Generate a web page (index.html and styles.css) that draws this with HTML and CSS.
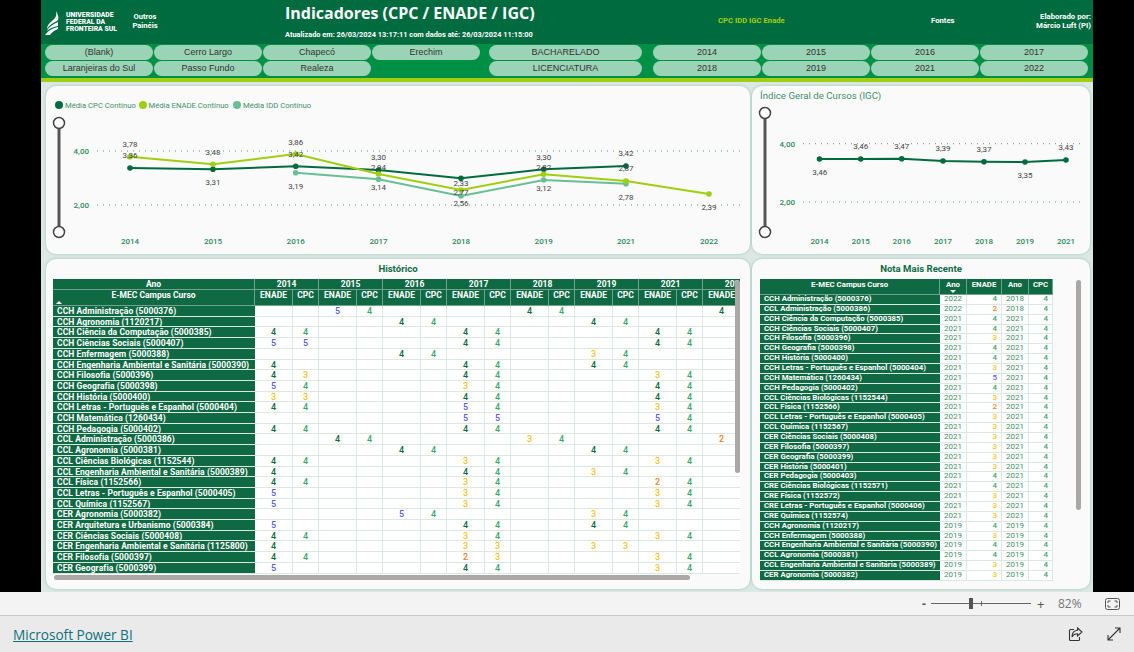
FILE: index.html
```html
<!DOCTYPE html>
<html lang="pt-BR">
<head>
  <meta charset="UTF-8">
  <title>Indicadores (CPC / ENADE / IGC)</title>
  <link rel="stylesheet" href="styles.css">
</head>
<body>

  <div class="stage">
    <div class="report">

      <header class="topbar">
        <div class="brand">
          <svg class="brand-logo" width="16" height="24" viewBox="0 0 16 24">
            <path fill="#fff" d="M11 0C12 4 11 7 7 10C4 12 2 15 2 18C4 14 8 12 12 10C14 9 14 5 11 0Z"/>
            <path fill="#fff" d="M13 11C9 13 4 15 2 20C5 17 9 16 13 15Z"/>
            <path fill="#fff" d="M13 16C8 17 4 19 1 23L0 24H5C7 21 10 19 13 18Z"/>
          </svg>
          <div class="brand-name">UNIVERSIDADE<br>FEDERAL DA<br>FRONTEIRA SUL</div>
        </div>
        <div class="outros">Outros<br>Painéis</div>
        <div class="heading">
          <h1>Indicadores (CPC / ENADE / IGC)</h1>
          <p>Atualizado em: 26/03/2024 13:17:11 com dados até: 26/03/2024 11:15:00</p>
        </div>
        <div class="toplink lime">CPC IDD IGC Enade</div>
        <div class="toplink">Fontes</div>
        <div class="author">Elaborado por:<br>Márcio Luft (PI)</div>
      </header>

      <nav class="filters">
        <div class="slicer slicer-campus">
          <button>(Blank)</button><button>Cerro Largo</button><button>Chapecó</button><button>Erechim</button>
          <button>Laranjeiras do Sul</button><button>Passo Fundo</button><button>Realeza</button>
        </div>
        <div class="slicer slicer-grau">
          <button>BACHARELADO</button>
          <button>LICENCIATURA</button>
        </div>
        <div class="slicer slicer-ano">
          <button>2014</button><button>2015</button><button>2016</button><button>2017</button>
          <button>2018</button><button>2019</button><button>2021</button><button>2022</button>
        </div>
      </nav>
      <div class="limebar"></div>

      <main class="canvas">

        <section class="card">
          <svg class="chart" width="704" height="168" viewBox="46 86 704 168">
            <circle cx="59" cy="105" r="4" fill="#006b3f"/>
            <text class="legend" x="65" y="108">Média CPC Contínuo</text>
            <circle cx="143" cy="105" r="4" fill="#a0ce10"/>
            <text class="legend" x="148.500" y="108">Média ENADE Contínuo</text>
            <circle cx="237" cy="105" r="4" fill="#68bf96"/>
            <text class="legend" x="243" y="108">Média IDD Contínuo</text>

            <line class="range" x1="59" y1="123" x2="59" y2="232"/>
            <circle class="knob" cx="59" cy="123" r="5.5"/>
            <circle class="knob" cx="59" cy="232" r="5.5"/>

            <text class="axis" x="89" y="154" text-anchor="end">4,00</text>
            <text class="axis" x="89" y="208" text-anchor="end">2,00</text>
            <line class="grid" x1="97" y1="151" x2="740" y2="151"/>
            <line class="grid" x1="97" y1="205" x2="740" y2="205"/>

            <polyline class="line idd" points="295.7,172.7 378.5,179.3 461,196 543.7,180 626,183.7"/>
            <polyline class="line cpc" points="130,168 213,169.3 295.7,166.3 378.5,170 461,178.3 543.7,169.3 626,166"/>
            <polyline class="line enade" points="130,156.7 213,164.3 295.7,154 378.5,174 461,190 543.7,174.3 626,181 709,194"/>

            <g fill="#68bf96">
              <circle cx="295.7" cy="172.7" r="2.8"/><circle cx="378.5" cy="179.3" r="2.8"/><circle cx="461" cy="196" r="2.8"/><circle cx="543.7" cy="180" r="2.8"/><circle cx="626" cy="183.7" r="2.8"/>
            </g>
            <g fill="#006b3f">
              <circle cx="130" cy="168" r="2.8"/><circle cx="213" cy="169.3" r="2.8"/><circle cx="295.7" cy="166.3" r="2.8"/><circle cx="378.5" cy="170" r="2.8"/><circle cx="461" cy="178.3" r="2.8"/><circle cx="543.7" cy="169.3" r="2.8"/><circle cx="626" cy="166" r="2.8"/>
            </g>
            <g fill="#a0ce10">
              <circle cx="130" cy="156.7" r="2.8"/><circle cx="213" cy="164.3" r="2.8"/><circle cx="295.7" cy="154" r="2.8"/><circle cx="378.5" cy="174" r="2.8"/><circle cx="461" cy="190" r="2.8"/><circle cx="543.7" cy="174.3" r="2.8"/><circle cx="626" cy="181" r="2.8"/><circle cx="709" cy="194" r="2.8"/>
            </g>

            <g class="values" text-anchor="middle">
              <text x="130" y="147">3,78</text><text x="130" y="158">3,36</text>
              <text x="213" y="155">3,48</text><text x="213" y="185">3,31</text>
              <text x="295.7" y="145">3,86</text><text x="295.7" y="157">3,42</text><text x="295.7" y="189">3,19</text>
              <text x="378.5" y="160">3,30</text><text x="378.5" y="170">2,94</text><text x="378.5" y="190">3,14</text>
              <text x="461" y="186">2,33</text><text x="461" y="195">2,77</text><text x="461" y="206">2,56</text>
              <text x="543.7" y="160">3,30</text><text x="543.7" y="170">2,82</text><text x="543.7" y="191">3,12</text>
              <text x="626" y="156">3,42</text><text x="626" y="171">2,87</text><text x="626" y="200">2,78</text>
              <text x="709" y="210">2,39</text>
            </g>

            <g class="axis" text-anchor="middle">
              <text x="130" y="244">2014</text><text x="213" y="244">2015</text><text x="295.7" y="244">2016</text><text x="378.5" y="244">2017</text>
              <text x="461" y="244">2018</text><text x="543.7" y="244">2019</text><text x="626" y="244">2021</text><text x="709" y="244">2022</text>
            </g>
          </svg>
        </section>

        <section class="card">
          <svg class="chart" width="338" height="168" viewBox="752 86 338 168">
            <text class="chart-title" x="760" y="99">Índice Geral de Cursos (IGC)</text>

            <line class="range" x1="765" y1="113" x2="765" y2="232"/>
            <circle class="knob" cx="765" cy="113" r="5.5"/>
            <circle class="knob" cx="765" cy="232" r="5.5"/>

            <text class="axis" x="795" y="147" text-anchor="end">4,00</text>
            <text class="axis" x="795" y="205" text-anchor="end">2,00</text>
            <line class="grid" x1="803" y1="143.7" x2="1082" y2="143.7"/>
            <line class="grid" x1="803" y1="202" x2="1082" y2="202"/>

            <polyline class="line cpc" points="819.5,159 860.7,159 901.7,158.7 943,161 984,161.7 1025,162 1066,160"/>
            <g fill="#006b3f">
              <circle cx="819.5" cy="159" r="2.8"/><circle cx="860.7" cy="159" r="2.8"/><circle cx="901.7" cy="158.7" r="2.8"/><circle cx="943" cy="161" r="2.8"/><circle cx="984" cy="161.7" r="2.8"/><circle cx="1025" cy="162" r="2.8"/><circle cx="1066" cy="160" r="2.8"/>
            </g>

            <g class="values" text-anchor="middle">
              <text x="819.7" y="175">3,46</text><text x="860.7" y="149">3,46</text><text x="901.7" y="149">3,47</text><text x="943" y="151">3,39</text>
              <text x="984" y="152">3,37</text><text x="1025" y="178">3,35</text><text x="1066" y="150">3,43</text>
            </g>

            <g class="axis" text-anchor="middle">
              <text x="819.5" y="244">2014</text><text x="860.7" y="244">2015</text><text x="901.7" y="244">2016</text><text x="943" y="244">2017</text>
              <text x="984" y="244">2018</text><text x="1025" y="244">2019</text><text x="1066" y="244">2021</text>
            </g>
          </svg>
        </section>

        <section class="card card-table">
          <h2>Histórico</h2>
          <div class="table-wrap hist-wrap">
            <table class="matrix">
              <colgroup>
                <col class="col-name"><col class="col-e"><col class="col-c"><col class="col-e"><col class="col-c"><col class="col-e"><col class="col-c"><col class="col-e"><col class="col-c"><col class="col-e"><col class="col-c"><col class="col-e"><col class="col-c"><col class="col-e"><col class="col-c"><col class="col-e"><col class="col-c">
              </colgroup>
              <thead>
                <tr class="head-year"><th>Ano</th><th colspan="2">2014</th><th colspan="2">2015</th><th colspan="2">2016</th><th colspan="2">2017</th><th colspan="2">2018</th><th colspan="2">2019</th><th colspan="2">2021</th><th colspan="2">2022</th></tr>
                <tr class="head-cols"><th>E-MEC Campus Curso<i class="sort-up"></i></th><th>ENADE</th><th>CPC</th><th>ENADE</th><th>CPC</th><th>ENADE</th><th>CPC</th><th>ENADE</th><th>CPC</th><th>ENADE</th><th>CPC</th><th>ENADE</th><th>CPC</th><th>ENADE</th><th>CPC</th><th>ENADE</th><th>CPC</th></tr>
              </thead>
              <tbody>
                <tr><th>CCH Administração (5000376)</th><td></td><td></td><td class="n5">5</td><td class="n4">4</td><td></td><td></td><td></td><td></td><td class="d4">4</td><td class="n4">4</td><td></td><td></td><td></td><td></td><td class="d4">4</td><td></td></tr>
                <tr><th>CCH Agronomia (1120217)</th><td></td><td></td><td></td><td></td><td class="d4">4</td><td class="n4">4</td><td></td><td></td><td></td><td></td><td class="d4">4</td><td class="n4">4</td><td></td><td></td><td></td><td></td></tr>
                <tr><th>CCH Ciência da Computação (5000385)</th><td class="d4">4</td><td class="n4">4</td><td></td><td></td><td></td><td></td><td class="d4">4</td><td class="n4">4</td><td></td><td></td><td></td><td></td><td class="d4">4</td><td class="n4">4</td><td></td><td></td></tr>
                <tr><th>CCH Ciências Sociais (5000407)</th><td class="n5">5</td><td class="n5">5</td><td></td><td></td><td></td><td></td><td class="d4">4</td><td class="n4">4</td><td></td><td></td><td></td><td></td><td class="d4">4</td><td class="n4">4</td><td></td><td></td></tr>
                <tr><th>CCH Enfermagem (5000388)</th><td></td><td></td><td></td><td></td><td class="d4">4</td><td class="n4">4</td><td></td><td></td><td></td><td></td><td class="n3">3</td><td class="n4">4</td><td></td><td></td><td></td><td></td></tr>
                <tr><th>CCH Engenharia Ambiental e Sanitária (5000390)</th><td class="d4">4</td><td></td><td></td><td></td><td></td><td></td><td class="d4">4</td><td class="n4">4</td><td></td><td></td><td class="d4">4</td><td class="n4">4</td><td></td><td></td><td></td><td></td></tr>
                <tr><th>CCH Filosofia (5000396)</th><td class="d4">4</td><td class="n3">3</td><td></td><td></td><td></td><td></td><td class="d4">4</td><td class="n4">4</td><td></td><td></td><td></td><td></td><td class="n3">3</td><td class="n4">4</td><td></td><td></td></tr>
                <tr><th>CCH Geografia (5000398)</th><td class="n5">5</td><td class="n4">4</td><td></td><td></td><td></td><td></td><td class="n3">3</td><td class="n4">4</td><td></td><td></td><td></td><td></td><td class="d4">4</td><td class="n4">4</td><td></td><td></td></tr>
                <tr><th>CCH História (5000400)</th><td class="n3">3</td><td class="n3">3</td><td></td><td></td><td></td><td></td><td class="d4">4</td><td class="n4">4</td><td></td><td></td><td></td><td></td><td class="d4">4</td><td class="n4">4</td><td></td><td></td></tr>
                <tr><th>CCH Letras - Português e Espanhol (5000404)</th><td class="d4">4</td><td class="n4">4</td><td></td><td></td><td></td><td></td><td class="n5">5</td><td class="n4">4</td><td></td><td></td><td></td><td></td><td class="n3">3</td><td class="n4">4</td><td></td><td></td></tr>
                <tr><th>CCH Matemática (1260434)</th><td></td><td></td><td></td><td></td><td></td><td></td><td class="n5">5</td><td class="n5">5</td><td></td><td></td><td></td><td></td><td class="n5">5</td><td class="n4">4</td><td></td><td></td></tr>
                <tr><th>CCH Pedagogia (5000402)</th><td class="d4">4</td><td class="n4">4</td><td></td><td></td><td></td><td></td><td class="d4">4</td><td class="n4">4</td><td></td><td></td><td></td><td></td><td class="d4">4</td><td class="n4">4</td><td></td><td></td></tr>
                <tr><th>CCL Administração (5000386)</th><td></td><td></td><td class="d4">4</td><td class="n4">4</td><td></td><td></td><td></td><td></td><td class="n3">3</td><td class="n4">4</td><td></td><td></td><td></td><td></td><td class="n2">2</td><td></td></tr>
                <tr><th>CCL Agronomia (5000381)</th><td></td><td></td><td></td><td></td><td class="d4">4</td><td class="n4">4</td><td></td><td></td><td></td><td></td><td class="d4">4</td><td class="n4">4</td><td></td><td></td><td></td><td></td></tr>
                <tr><th>CCL Ciências Biológicas (1152544)</th><td class="d4">4</td><td class="n4">4</td><td></td><td></td><td></td><td></td><td class="n3">3</td><td class="n4">4</td><td></td><td></td><td></td><td></td><td class="n3">3</td><td class="n4">4</td><td></td><td></td></tr>
                <tr><th>CCL Engenharia Ambiental e Sanitária (5000389)</th><td class="d4">4</td><td></td><td></td><td></td><td></td><td></td><td class="d4">4</td><td class="n4">4</td><td></td><td></td><td class="n3">3</td><td class="n4">4</td><td></td><td></td><td></td><td></td></tr>
                <tr><th>CCL Física (1152566)</th><td class="d4">4</td><td class="n4">4</td><td></td><td></td><td></td><td></td><td class="n3">3</td><td class="n4">4</td><td></td><td></td><td></td><td></td><td class="n2">2</td><td class="n4">4</td><td></td><td></td></tr>
                <tr><th>CCL Letras - Português e Espanhol (5000405)</th><td class="n5">5</td><td></td><td></td><td></td><td></td><td></td><td class="n3">3</td><td class="n4">4</td><td></td><td></td><td></td><td></td><td class="n3">3</td><td class="n4">4</td><td></td><td></td></tr>
                <tr><th>CCL Química (1152567)</th><td class="n5">5</td><td></td><td></td><td></td><td></td><td></td><td class="n3">3</td><td class="n4">4</td><td></td><td></td><td></td><td></td><td class="n3">3</td><td class="n4">4</td><td></td><td></td></tr>
                <tr><th>CER Agronomia (5000382)</th><td></td><td></td><td></td><td></td><td class="n5">5</td><td class="n4">4</td><td></td><td></td><td></td><td></td><td class="n3">3</td><td class="n4">4</td><td></td><td></td><td></td><td></td></tr>
                <tr><th>CER Arquitetura e Urbanismo (5000384)</th><td class="n5">5</td><td></td><td></td><td></td><td></td><td></td><td class="d4">4</td><td class="n4">4</td><td></td><td></td><td class="d4">4</td><td class="n4">4</td><td></td><td></td><td></td><td></td></tr>
                <tr><th>CER Ciências Sociais (5000408)</th><td class="d4">4</td><td class="n4">4</td><td></td><td></td><td></td><td></td><td class="n3">3</td><td class="n4">4</td><td></td><td></td><td></td><td></td><td class="n3">3</td><td class="n4">4</td><td></td><td></td></tr>
                <tr><th>CER Engenharia Ambiental e Sanitária (1125800)</th><td class="d4">4</td><td></td><td></td><td></td><td></td><td></td><td class="n3">3</td><td class="n3">3</td><td></td><td></td><td class="n3">3</td><td class="n3">3</td><td></td><td></td><td></td><td></td></tr>
                <tr><th>CER Filosofia (5000397)</th><td class="d4">4</td><td class="n4">4</td><td></td><td></td><td></td><td></td><td class="n2">2</td><td class="n3">3</td><td></td><td></td><td></td><td></td><td class="n3">3</td><td class="n4">4</td><td></td><td></td></tr>
                <tr><th>CER Geografia (5000399)</th><td class="n5">5</td><td></td><td></td><td></td><td></td><td></td><td class="d4">4</td><td class="n4">4</td><td></td><td></td><td></td><td></td><td class="n3">3</td><td class="n4">4</td><td></td><td></td></tr>
              </tbody>
            </table>
          </div>
          <div class="scroll-v hist-v"></div>
          <div class="scroll-h hist-h"></div>
        </section>

        <section class="card card-table">
          <h2>Nota Mais Recente</h2>
          <div class="table-wrap recent-wrap">
            <table class="recent">
              <colgroup>
                <col class="col-rname"><col class="col-rano"><col class="col-renade"><col class="col-rano"><col class="col-rcpc">
              </colgroup>
              <thead>
                <tr><th>E-MEC Campus Curso</th><th>Ano<i class="sort-down"></i></th><th>ENADE</th><th>Ano</th><th>CPC</th></tr>
              </thead>
              <tbody>
                <tr><th>CCH Administração (5000376)</th><td>2022</td><td class="n4">4</td><td>2018</td><td class="n4">4</td></tr>
                <tr><th>CCL Administração (5000386)</th><td>2022</td><td class="n2">2</td><td>2018</td><td class="n4">4</td></tr>
                <tr><th>CCH Ciência da Computação (5000385)</th><td>2021</td><td class="n4">4</td><td>2021</td><td class="n4">4</td></tr>
                <tr><th>CCH Ciências Sociais (5000407)</th><td>2021</td><td class="n4">4</td><td>2021</td><td class="n4">4</td></tr>
                <tr><th>CCH Filosofia (5000396)</th><td>2021</td><td class="n3">3</td><td>2021</td><td class="n4">4</td></tr>
                <tr><th>CCH Geografia (5000398)</th><td>2021</td><td class="n4">4</td><td>2021</td><td class="n4">4</td></tr>
                <tr><th>CCH História (5000400)</th><td>2021</td><td class="n4">4</td><td>2021</td><td class="n4">4</td></tr>
                <tr><th>CCH Letras - Português e Espanhol (5000404)</th><td>2021</td><td class="n3">3</td><td>2021</td><td class="n4">4</td></tr>
                <tr><th>CCH Matemática (1260434)</th><td>2021</td><td class="n5">5</td><td>2021</td><td class="n4">4</td></tr>
                <tr><th>CCH Pedagogia (5000402)</th><td>2021</td><td class="n4">4</td><td>2021</td><td class="n4">4</td></tr>
                <tr><th>CCL Ciências Biológicas (1152544)</th><td>2021</td><td class="n3">3</td><td>2021</td><td class="n4">4</td></tr>
                <tr><th>CCL Física (1152566)</th><td>2021</td><td class="n2">2</td><td>2021</td><td class="n4">4</td></tr>
                <tr><th>CCL Letras - Português e Espanhol (5000405)</th><td>2021</td><td class="n3">3</td><td>2021</td><td class="n4">4</td></tr>
                <tr><th>CCL Química (1152567)</th><td>2021</td><td class="n3">3</td><td>2021</td><td class="n4">4</td></tr>
                <tr><th>CER Ciências Sociais (5000408)</th><td>2021</td><td class="n3">3</td><td>2021</td><td class="n4">4</td></tr>
                <tr><th>CER Filosofia (5000397)</th><td>2021</td><td class="n3">3</td><td>2021</td><td class="n4">4</td></tr>
                <tr><th>CER Geografia (5000399)</th><td>2021</td><td class="n3">3</td><td>2021</td><td class="n4">4</td></tr>
                <tr><th>CER História (5000401)</th><td>2021</td><td class="n3">3</td><td>2021</td><td class="n4">4</td></tr>
                <tr><th>CER Pedagogia (5000403)</th><td>2021</td><td class="n4">4</td><td>2021</td><td class="n4">4</td></tr>
                <tr><th>CRE Ciências Biológicas (1152571)</th><td>2021</td><td class="n4">4</td><td>2021</td><td class="n4">4</td></tr>
                <tr><th>CRE Física (1152572)</th><td>2021</td><td class="n3">3</td><td>2021</td><td class="n4">4</td></tr>
                <tr><th>CRE Letras - Português e Espanhol (5000406)</th><td>2021</td><td class="n3">3</td><td>2021</td><td class="n4">4</td></tr>
                <tr><th>CRE Química (1152574)</th><td>2021</td><td class="n3">3</td><td>2021</td><td class="n4">4</td></tr>
                <tr><th>CCH Agronomia (1120217)</th><td>2019</td><td class="n4">4</td><td>2019</td><td class="n4">4</td></tr>
                <tr><th>CCH Enfermagem (5000388)</th><td>2019</td><td class="n3">3</td><td>2019</td><td class="n4">4</td></tr>
                <tr><th>CCH Engenharia Ambiental e Sanitária (5000390)</th><td>2019</td><td class="n4">4</td><td>2019</td><td class="n4">4</td></tr>
                <tr><th>CCL Agronomia (5000381)</th><td>2019</td><td class="n4">4</td><td>2019</td><td class="n4">4</td></tr>
                <tr><th>CCL Engenharia Ambiental e Sanitária (5000389)</th><td>2019</td><td class="n3">3</td><td>2019</td><td class="n4">4</td></tr>
                <tr><th>CER Agronomia (5000382)</th><td>2019</td><td class="n3">3</td><td>2019</td><td class="n4">4</td></tr>
              </tbody>
            </table>
          </div>
          <div class="scroll-v recent-v"></div>
        </section>

      </main>
    </div>
  </div>

  <div class="zoombar">
    <span class="zoom-sign">-</span>
    <div class="zoom-track"><i class="zoom-mark"></i><i class="zoom-thumb"></i></div>
    <span class="zoom-sign zoom-plus">+</span>
    <span class="zoom-value">82%</span>
    <svg class="fit-icon" width="15" height="12" viewBox="0 0 15 12" fill="none" stroke="#555">
      <rect x="0.5" y="0.5" width="14" height="11" rx="2"/>
      <path d="M3 5V3H5.5M9.5 3H12V5M12 7V9H9.5M5.5 9H3V7"/>
    </svg>
  </div>

  <footer class="pbi-footer">
    <a href="#">Microsoft Power BI</a>
    <svg class="share-icon" width="15" height="15" viewBox="0 0 15 15" fill="none" stroke="#333" stroke-width="1.1">
      <path d="M6 2.5H2.5A1 1 0 0 0 1.5 3.500V12.500A1 1 0 0 0 2.500 13.500H10.500A1 1 0 0 0 11.500 12.500V10"/>
      <path d="M9.500 1L14 5L9.500 9V6.800C7 6.800 5.200 7.800 4 10C4 6.500 6 3.500 9.500 3.200Z"/>
    </svg>
    <svg class="expand-icon" width="14" height="14" viewBox="0 0 14 14" fill="none" stroke="#333" stroke-width="1.1">
      <path d="M1 13L13 1M8 1H13V6M1 8V13H6"/>
    </svg>
  </footer>

</body>
</html>
```

FILE: styles.css
```css
* {
  box-sizing: border-box;
}

body {
  margin: 0;
  width: 1134px;
  height: 652px;
  overflow: hidden;
  background: #eaeaea;
  font-family: Roboto, "Liberation Sans", sans-serif;
}

.stage {
  height: 592px;
  padding: 0 41px;
  background: #000;
}

.report {
  width: 1052px;
  height: 592px;
  background: #dbe8e3;
}

/* top bar */
.topbar {
  display: grid;
  grid-template-columns: 91px 153px 433px 213px 90px 1fr;
  height: 44px;
  background: #006b3f;
  color: #fff;
}

.brand {
  display: flex;
  align-items: center;
  gap: 5px;
  padding-left: 4px;
}

.brand-logo {
  flex: none;
  margin-top: 2px;
}

.brand-name {
  font-size: 6.8px;
  font-weight: 900;
  line-height: 7px;
  white-space: nowrap;
}

.outros {
  padding-top: 12px;
  width: 26px;
  font-size: 7.6px;
  font-weight: 700;
  line-height: 9px;
  text-align: center;
}

.heading h1 {
  margin: 4px 0 0;
  font-size: 16px;
  font-weight: 700;
  line-height: 18px;
  white-space: nowrap;
  font-family: "Open Sans", sans-serif;
}

.heading p {
  margin: 8px 0 0;
  font-size: 7.4px;
  font-weight: 700;
  line-height: 9px;
  white-space: nowrap;
}

.toplink {
  padding-top: 16px;
  font-size: 7.7px;
  font-weight: 700;
  line-height: 9px;
}

.lime {
  color: #a0ce10;
}

.author {
  padding: 12px 2px 0 0;
  font-size: 7.8px;
  font-weight: 700;
  line-height: 9px;
  text-align: right;
  white-space: nowrap;
}

/* filter band */
.filters {
  display: flex;
  height: 34px;
  padding: 1px 4px 0;
  background: #009045;
}

.slicer {
  display: grid;
  grid-auto-rows: 15px;
  gap: 1px;
}

.slicer-campus {
  grid-template-columns: repeat(4, 108px);
  width: 436px;
  margin-right: 8px;
}

.slicer-grau {
  grid-template-columns: 153px;
  margin-right: 11px;
}

.slicer-ano {
  grid-template-columns: repeat(4, 108px);
}

.slicer button {
  padding: 0;
  border: none;
  border-radius: 8px;
  background: #9ad3b5;
  color: #333;
  font-family: "Liberation Sans", Arial, sans-serif;
  font-size: 9px;
  line-height: 15px;
  white-space: nowrap;
}

.limebar {
  height: 4px;
  background: #a0ce10;
}

/* report canvas */
.canvas {
  display: grid;
  grid-template-columns: 704px 338px;
  grid-template-rows: 168px 330px;
  gap: 5px 2px;
  padding: 4px 3px 3px 5px;
}

.card {
  position: relative;
  overflow: hidden;
  border-radius: 10px;
  background: #fafafa;
  box-shadow: 0 0 3px #9cc4b2;
}

.chart {
  display: block;
}

.legend {
  fill: #3f8f6b;
  font-size: 7.7px;
}

.chart-title {
  fill: #3f8f6b;
  font-size: 9.7px;
}

.range {
  stroke: #555;
  stroke-width: 3;
}

.knob {
  fill: #fff;
  stroke: #444;
  stroke-width: 1.5;
}

.axis {
  fill: #2d8a60;
  font-size: 8px;
  font-weight: 500;
}

.grid {
  stroke: #5e9c80;
  stroke-width: 1;
  stroke-dasharray: 1 5;
}

.line {
  fill: none;
  stroke-width: 2;
}

.cpc {
  stroke: #006b3f;
}

.enade {
  stroke: #a0ce10;
}

.idd {
  stroke: #68bf96;
}

.values {
  fill: #444;
  font-size: 8px;
}

/* tables */
.card-table h2 {
  margin: 0;
  padding-top: 3px;
  color: #0d6a44;
  font-size: 9.6px;
  font-weight: 700;
  line-height: 13px;
  text-align: center;
}

.table-wrap {
  overflow: hidden;
}

.hist-wrap {
  width: 687px;
  height: 295px;
  margin: 4px 0 0 7px;
}

.recent-wrap {
  width: 293px;
  height: 302px;
  margin: 4px 0 0 8px;
}

table {
  border-collapse: separate;
  border-spacing: 0;
  table-layout: fixed;
  font-size: 8.5px;
}

.matrix {
  width: 713px;
}

.col-name {
  width: 202px;
}

.col-e {
  width: 38px;
}

.col-c {
  width: 26px;
}

.recent {
  width: 293px;
  font-size: 7.8px;
}

.col-rname {
  width: 180px;
}

.col-rano {
  width: 27px;
}

.col-renade {
  width: 35px;
}

.col-rcpc {
  width: 24px;
}

th {
  overflow: hidden;
  background: #0f6a44;
  color: #fff;
  font-weight: 700;
  white-space: nowrap;
}

thead th {
  position: relative;
  padding: 0;
  border-right: 1px solid #6fa48c;
  border-bottom: 1px solid #6fa48c;
  vertical-align: top;
  text-align: center;
}

.head-year th {
  height: 11px;
  line-height: 10px;
}

.head-cols th {
  height: 16px;
  line-height: 10px;
}

tbody th {
  height: 10.7px;
  padding: 1px 0 0 4px;
  border-bottom: 1px solid #dbe8e3;
  letter-spacing: 0.08px;
  line-height: 8.7px;
  text-align: left;
}

.recent thead th {
  height: 16px;
  line-height: 11px;
}

.recent tbody th {
  height: 9.86px;
  padding-top: 0;
  letter-spacing: 0;
  line-height: 8.86px;
}

td {
  padding: 1px 0 0;
  border-right: 1px solid #dbe8e3;
  border-bottom: 1px solid #dbe8e3;
  background: #fff;
  font-size: 9px;
  font-weight: 500;
  line-height: 8.7px;
  text-align: center;
}

.recent td {
  padding-top: 0;
  color: #3f8f6b;
  font-size: 8px;
  font-weight: 400;
  line-height: 8.86px;
}

.recent td:nth-child(3),
.recent td:nth-child(5) {
  padding-right: 4px;
  font-weight: 500;
  text-align: right;
}

.recent td.n5 { color: #5a5af0; }
.recent td.n4 { color: #3aa76d; }
.recent td.n3 { color: #fcc419; }
.recent td.n2 { color: #f58220; }

.n5 { color: #5a5af0; }
.n4 { color: #3aa76d; }
.d4 { color: #0f6a44; }
.n3 { color: #fcc419; }
.n2 { color: #f58220; }

.sort-up,
.sort-down {
  position: absolute;
  width: 0;
  height: 0;
  border-right: 3px solid transparent;
  border-left: 3px solid transparent;
}

.sort-up {
  left: 3px;
  top: 11px;
  border-bottom: 3px solid #fff;
}

.sort-down {
  left: 10px;
  top: 11px;
  border-top: 3px solid #fff;
}

/* scrollbars sit over the table */
.scroll-v,
.scroll-h {
  position: absolute;
  border-radius: 3px;
  background: #aaa8a5;
}

.scroll-v {
  width: 5px;
}

.scroll-h {
  height: 5px;
}

.hist-v {
  left: 689px;
  top: 21px;
  height: 193px;
}

.hist-h {
  left: 8px;
  top: 316px;
  width: 636px;
}

.recent-v {
  left: 324px;
  top: 21px;
  height: 230px;
}

/* power bi chrome */
.zoombar {
  position: relative;
  display: flex;
  align-items: center;
  height: 24px;
  padding-left: 922px;
  border-bottom: 1px solid #c8c8c8;
  background: #f3f3f3;
  color: #555;
  font-family: "Open Sans", sans-serif;
  font-size: 12px;
}

.zoom-sign {
  width: 9px;
  font-weight: 700;
}

.zoom-plus {
  width: 10px;
  margin-left: 6px;
  font-size: 13px;
  font-weight: 400;
}

.zoom-track {
  position: relative;
  width: 100px;
  height: 1px;
  background: #666;
}

.zoom-thumb {
  position: absolute;
  left: 38px;
  top: -5px;
  width: 4px;
  height: 11px;
  background: #555;
}

.zoom-mark {
  position: absolute;
  left: 50px;
  top: -2px;
  width: 1px;
  height: 5px;
  background: #666;
}

.zoom-value {
  margin-left: 11px;
  color: #777;
}

.fit-icon {
  margin-left: 23px;
}

.pbi-footer {
  display: flex;
  align-items: center;
  height: 36px;
  padding-left: 13px;
  background: #eaeaea;
}

.pbi-footer a {
  color: #11707d;
  font-family: "Open Sans", sans-serif;
  font-size: 13.6px;
}

.share-icon {
  margin-left: 935px;
}

.expand-icon {
  margin-left: 24px;
}
```
